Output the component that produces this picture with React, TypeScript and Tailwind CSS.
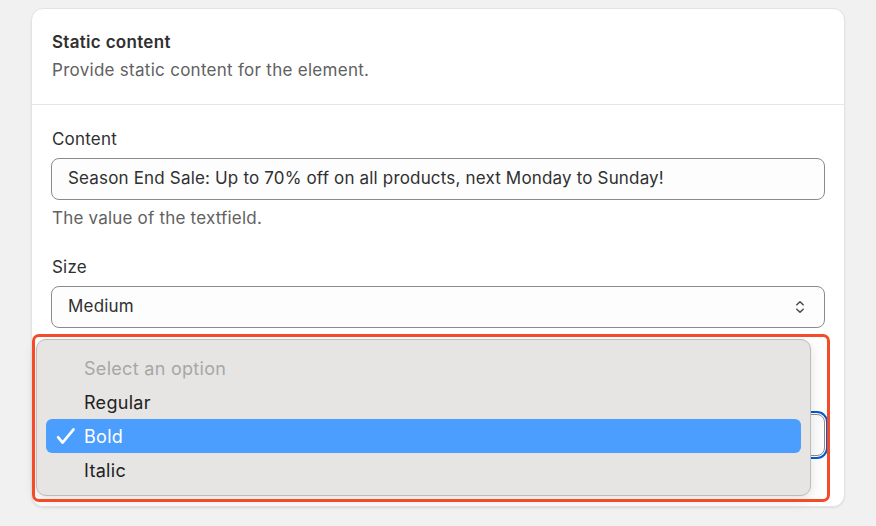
import React from "react";

function Chevrons() {
  return (
    <svg width="20" height="20" viewBox="0 0 20 20" fill="none" stroke="#4a4a4a" strokeWidth="1.5" strokeLinecap="round" strokeLinejoin="round">
      <path d="M6.8 7.8 10 4.8l3.2 3" />
      <path d="M6.8 12.2 10 15.2l3.2-3" />
    </svg>
  );
}

function Check() {
  return (
    <svg width="22" height="18" viewBox="0 0 22 18" fill="none" stroke="#ffffff" strokeWidth="2.6" strokeLinecap="round" strokeLinejoin="round">
      <path d="M3 10.2 7.6 15.6 18.6 2.4" />
    </svg>
  );
}

export default function App() {
  const font = { fontFamily: "Inter, 'Noto Sans', sans-serif" };
  return (
    <div className="w-[876px] h-[526px] bg-[#f1f1f1] overflow-hidden pt-2" style={font}>
      <div className="relative mx-[31px] rounded-[12px] border border-[#e3e3e3] bg-white shadow-[0_1px_2px_rgba(0,0,0,0.08)] text-[17px] tracking-[0.2px]">
        <div className="px-5 pt-[21px] pb-[22px] border-b border-[#e6e6e6]">
          <div className="leading-6 font-semibold text-[#303030] tracking-[0.3px]">Static content</div>
          <div className="mt-1 leading-6 text-[#616161] tracking-[0.28px]">Provide static content for the element.</div>
        </div>
        <div className="px-[19px] pt-[22px] pb-[50px]">
          <div className="leading-6 text-[#303030] pl-px">Content</div>
          <div className="mt-[7px] h-[42px] rounded-[8px] border border-[#8a8a8a] bg-[#fdfdfd] flex items-center px-4 text-[#303030] tracking-[0.17px]">
            Season End Sale: Up to 70% off on all products, next Monday to Sunday!
          </div>
          <div className="mt-[6px] leading-6 text-[#616161] pl-px">The value of the textfield.</div>

          <div className="mt-[25px] leading-6 text-[#303030] pl-px">Size</div>
          <div className="mt-[7px] h-[42px] rounded-[8px] border border-[#8a8a8a] bg-[#fdfdfd] flex items-center justify-between pl-4 pr-[14px] text-[#303030]">
            <span>Medium</span>
            <Chevrons />
          </div>

          <div className="mt-[86px] h-[42px] rounded-[8px] border border-[#8a8a8a] bg-[#fdfdfd] outline-2 outline-offset-1 outline-[#005bd3]" />
        </div>

        {/* dropdown menu */}
        <div className="absolute left-[4px] top-[330px] w-[775px] h-[157px] rounded-[10px] border border-[#bcbcbc] bg-[#e6e5e3] shadow-[0_4px_14px_rgba(0,0,0,0.12)] px-[9px] pt-[11px] text-[18px] tracking-[0.3px]">
          <div className="h-[34px] flex items-center pl-[38px] text-[#a7a7a7]">Select an option</div>
          <div className="h-[34px] flex items-center pl-[38px] text-[#222222]">Regular</div>
          <div className="h-[34px] flex items-center rounded-[6px] bg-[#4b9efe] text-white">
            <span className="w-[38px] flex justify-center pl-[2px]"><Check /></span>
            <span>Bold</span>
          </div>
          <div className="h-[34px] flex items-center pl-[38px] text-[#222222]">Italic</div>
        </div>

        {/* annotation box */}
        <div className="absolute left-0 top-[325px] w-[798px] h-[168px] rounded-[7px] border-[3px] border-[#f54b29] pointer-events-none" />
      </div>
    </div>
  );
}
